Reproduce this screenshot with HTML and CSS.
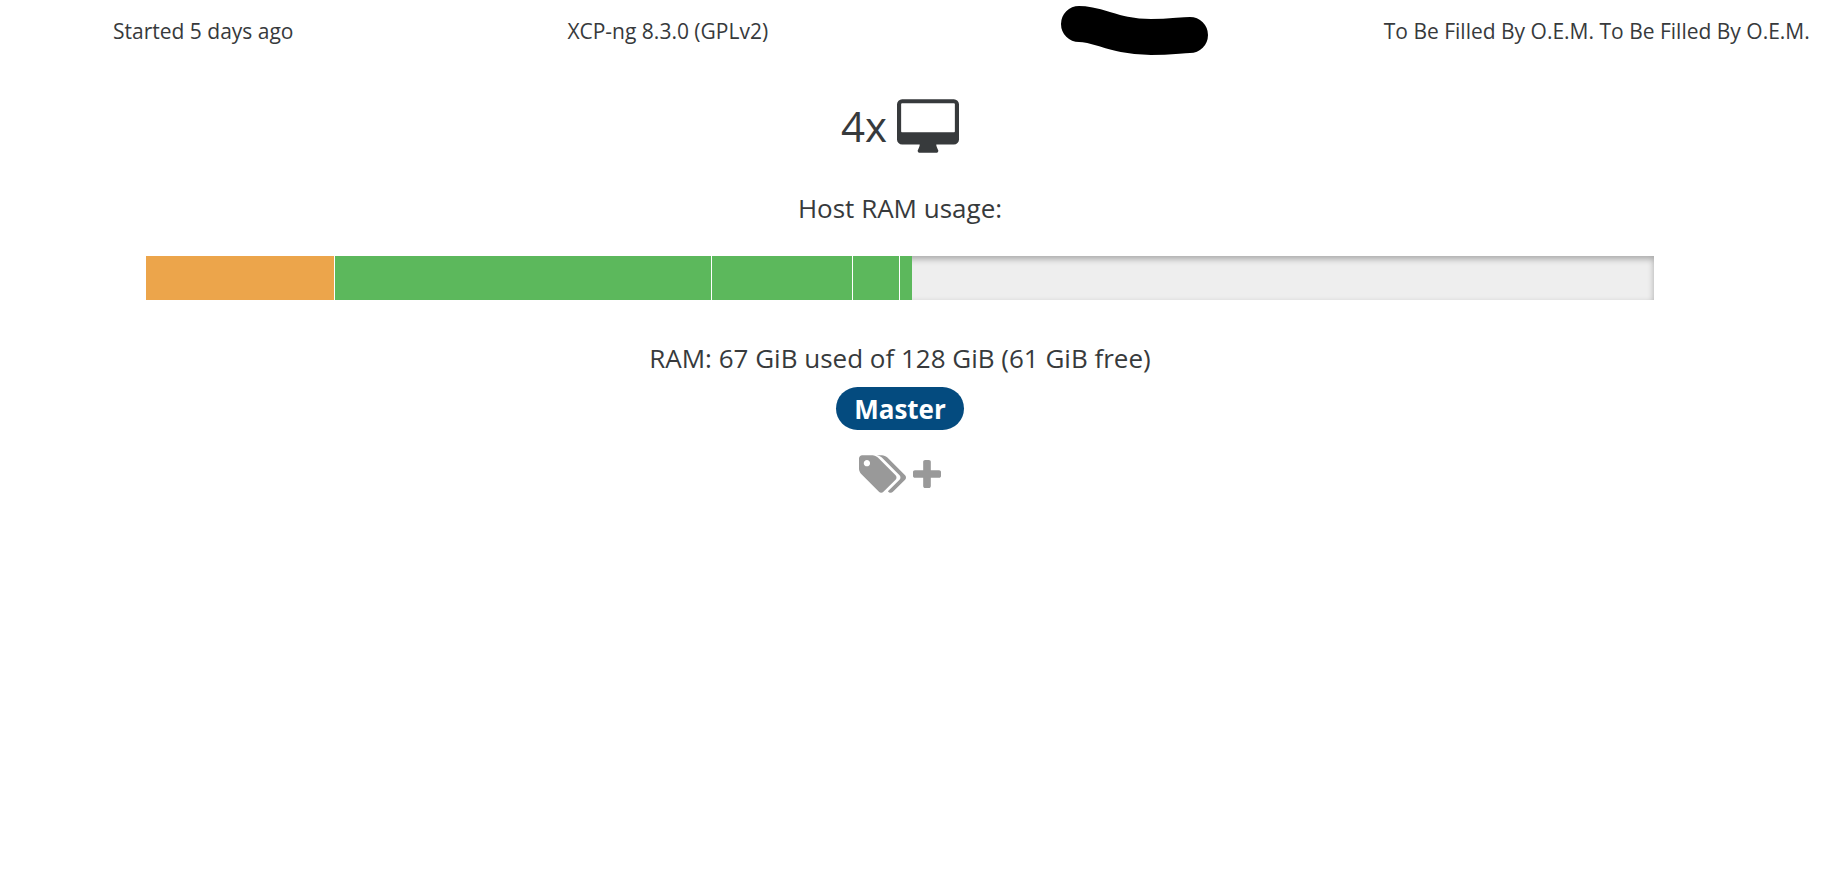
FILE: index.html
```html
<!DOCTYPE html>
<html lang="en">
<head>
<meta charset="utf-8">
<title>Host overview</title>
<link rel="stylesheet" href="styles.css">
</head>
<body>
<main class="page">
  <div class="facts">
    <p class="fact">Started 5 days ago</p>
    <p class="fact">XCP-ng 8.3.0 (GPLv2)</p>
    <p class="fact">
      <svg class="redaction" viewBox="0 0 152 52" aria-label="Redacted"><path d="M23 19C44 19 58 32 95 32C116 32 124 30 134 30"/></svg>
    </p>
    <p class="fact">To Be Filled By O.E.M. To Be Filled By O.E.M.</p>
  </div>
  <p class="vms">4x
    <svg class="icon-desktop" viewBox="0 0 1920 1664" aria-label="VMs"><path d="M1792 992v-832q0-13-9.5-22.5t-22.5-9.5h-1600q-13 0-22.5 9.5t-9.5 22.5v832q0 13 9.5 22.5t22.5 9.5h1600q13 0 22.5-9.5t9.5-22.5zm128-832v1088q0 66-47 113t-113 47h-544q0 37 16 77.5t32 71 16 43.5q0 26-19 45t-45 19h-512q-26 0-45-19t-19-45q0-14 16-44t32-70 16-78h-544q-66 0-113-47t-47-113v-1088q0-66 47-113t113-47h1600q66 0 113 47t47 113z"/></svg>
  </p>
  <h1 class="label">Host RAM usage:</h1>
  <div class="usage" role="img" aria-label="67 GiB used of 128 GiB">
    <div class="segment segment-host" style="width: 12.5%"></div>
    <div class="segment" style="width: 25%"></div>
    <div class="segment" style="width: 9.375%"></div>
    <div class="segment" style="width: 3.125%"></div>
    <div class="segment" style="width: 0.78%"></div>
  </div>
  <p class="label">RAM: 67 GiB used of 128 GiB (61 GiB free)</p>
  <span class="badge">Master</span>
  <div class="tags">
    <svg class="icon-tags" viewBox="0 128 1899 1515" aria-label="Tags"><path d="M448 448q0-53-37.500-90.500t-90.500-37.500-90.500 37.500-37.500 90.500 37.500 90.500 90.500 37.500 90.500-37.500 37.500-90.500zm1067 576q0 53-37 90l-491 492q-39 37-91 37-53 0-90-37l-715-716q-38-37-64.500-101t-26.500-117v-416q0-52 38-90t90-38h416q53 0 117 26.500t102 64.500l715 714q37 39 37 91zm384 0q0 53-37 90l-491 492q-39 37-91 37-36 0-59-14t-53-45l470-470q37-37 37-90 0-52-37-91l-715-714q-38-38-102-64.500t-117-26.500h224q53 0 117 26.500t102 64.500l715 714q37 39 37 91z"/></svg>
    <button class="add" type="button" aria-label="Add tag">
      <svg class="icon-plus" viewBox="0 128 1408 1408"><path d="M1408 736v192q0 40-28 68t-68 28h-416v416q0 40-28 68t-68 28h-192q-40 0-68-28t-28-68v-416h-416q-40 0-68-28t-28-68v-192q0-40 28-68t68-28h416v-416q0-40 28-68t68-28h192q40 0 68 28t28 68v416h416q40 0 68 28t28 68z"/></svg>
    </button>
  </div>
</main>
</body>
</html>
```

FILE: styles.css
```css
* {
  box-sizing: border-box;
}

body {
  margin: 0;
  background: #fff;
  color: #373a3c;
  font-family: "Segoe UI", "Open Sans", "Noto Sans", sans-serif;
}

p,
h1 {
  margin: 0;
  font-weight: 400;
}

svg {
  display: block;
  fill: currentColor;
}

.page {
  display: flex;
  flex-direction: column;
  align-items: center;
  margin-right: 30px;
}

.facts {
  display: grid;
  grid-template-columns: repeat(4, 1fr);
  align-self: stretch;
  margin: 0 -29px;
  height: 62px;
}

.fact {
  display: flex;
  align-items: center;
  justify-content: center;
  font-size: 21px;
  white-space: nowrap;
}

.redaction {
  width: 152px;
  height: 52px;
  fill: none;
  stroke: #000;
  stroke-width: 36px;
  stroke-linecap: round;
}

.vms {
  display: flex;
  align-items: center;
  gap: 10px;
  margin-top: 34px;
  font-size: 42px;
  line-height: 60px;
}

.icon-desktop {
  width: 62px;
  height: 54px;
}

.label {
  font-size: 26px;
  line-height: 40px;
}

h1.label {
  margin-top: 32px;
}

.usage {
  display: flex;
  align-self: stretch;
  height: 44px;
  margin: 28px 146px 38px;
  background: #eee;
  box-shadow: inset 0 3px 6px rgba(0, 0, 0, 0.3);
}

.segment {
  background: #5cb85c;
  border-right: 1px solid #fff;
}

.segment-host {
  background: #eca54b;
}

.segment:last-child {
  border-right: 0;
}

.badge {
  margin-top: 9px;
  padding: 1px 18px 0;
  border-radius: 22px;
  background: #044b7f;
  color: #fff;
  font-size: 26px;
  font-weight: 700;
  line-height: 42px;
}

.tags {
  display: flex;
  align-items: center;
  gap: 7px;
  margin-top: 25px;
  color: #999;
}

.icon-tags {
  width: 47px;
  height: 38px;
}

.add {
  padding: 0;
  border: 0;
  background: none;
  color: inherit;
}

.icon-plus {
  width: 28px;
  height: 28px;
}
```
